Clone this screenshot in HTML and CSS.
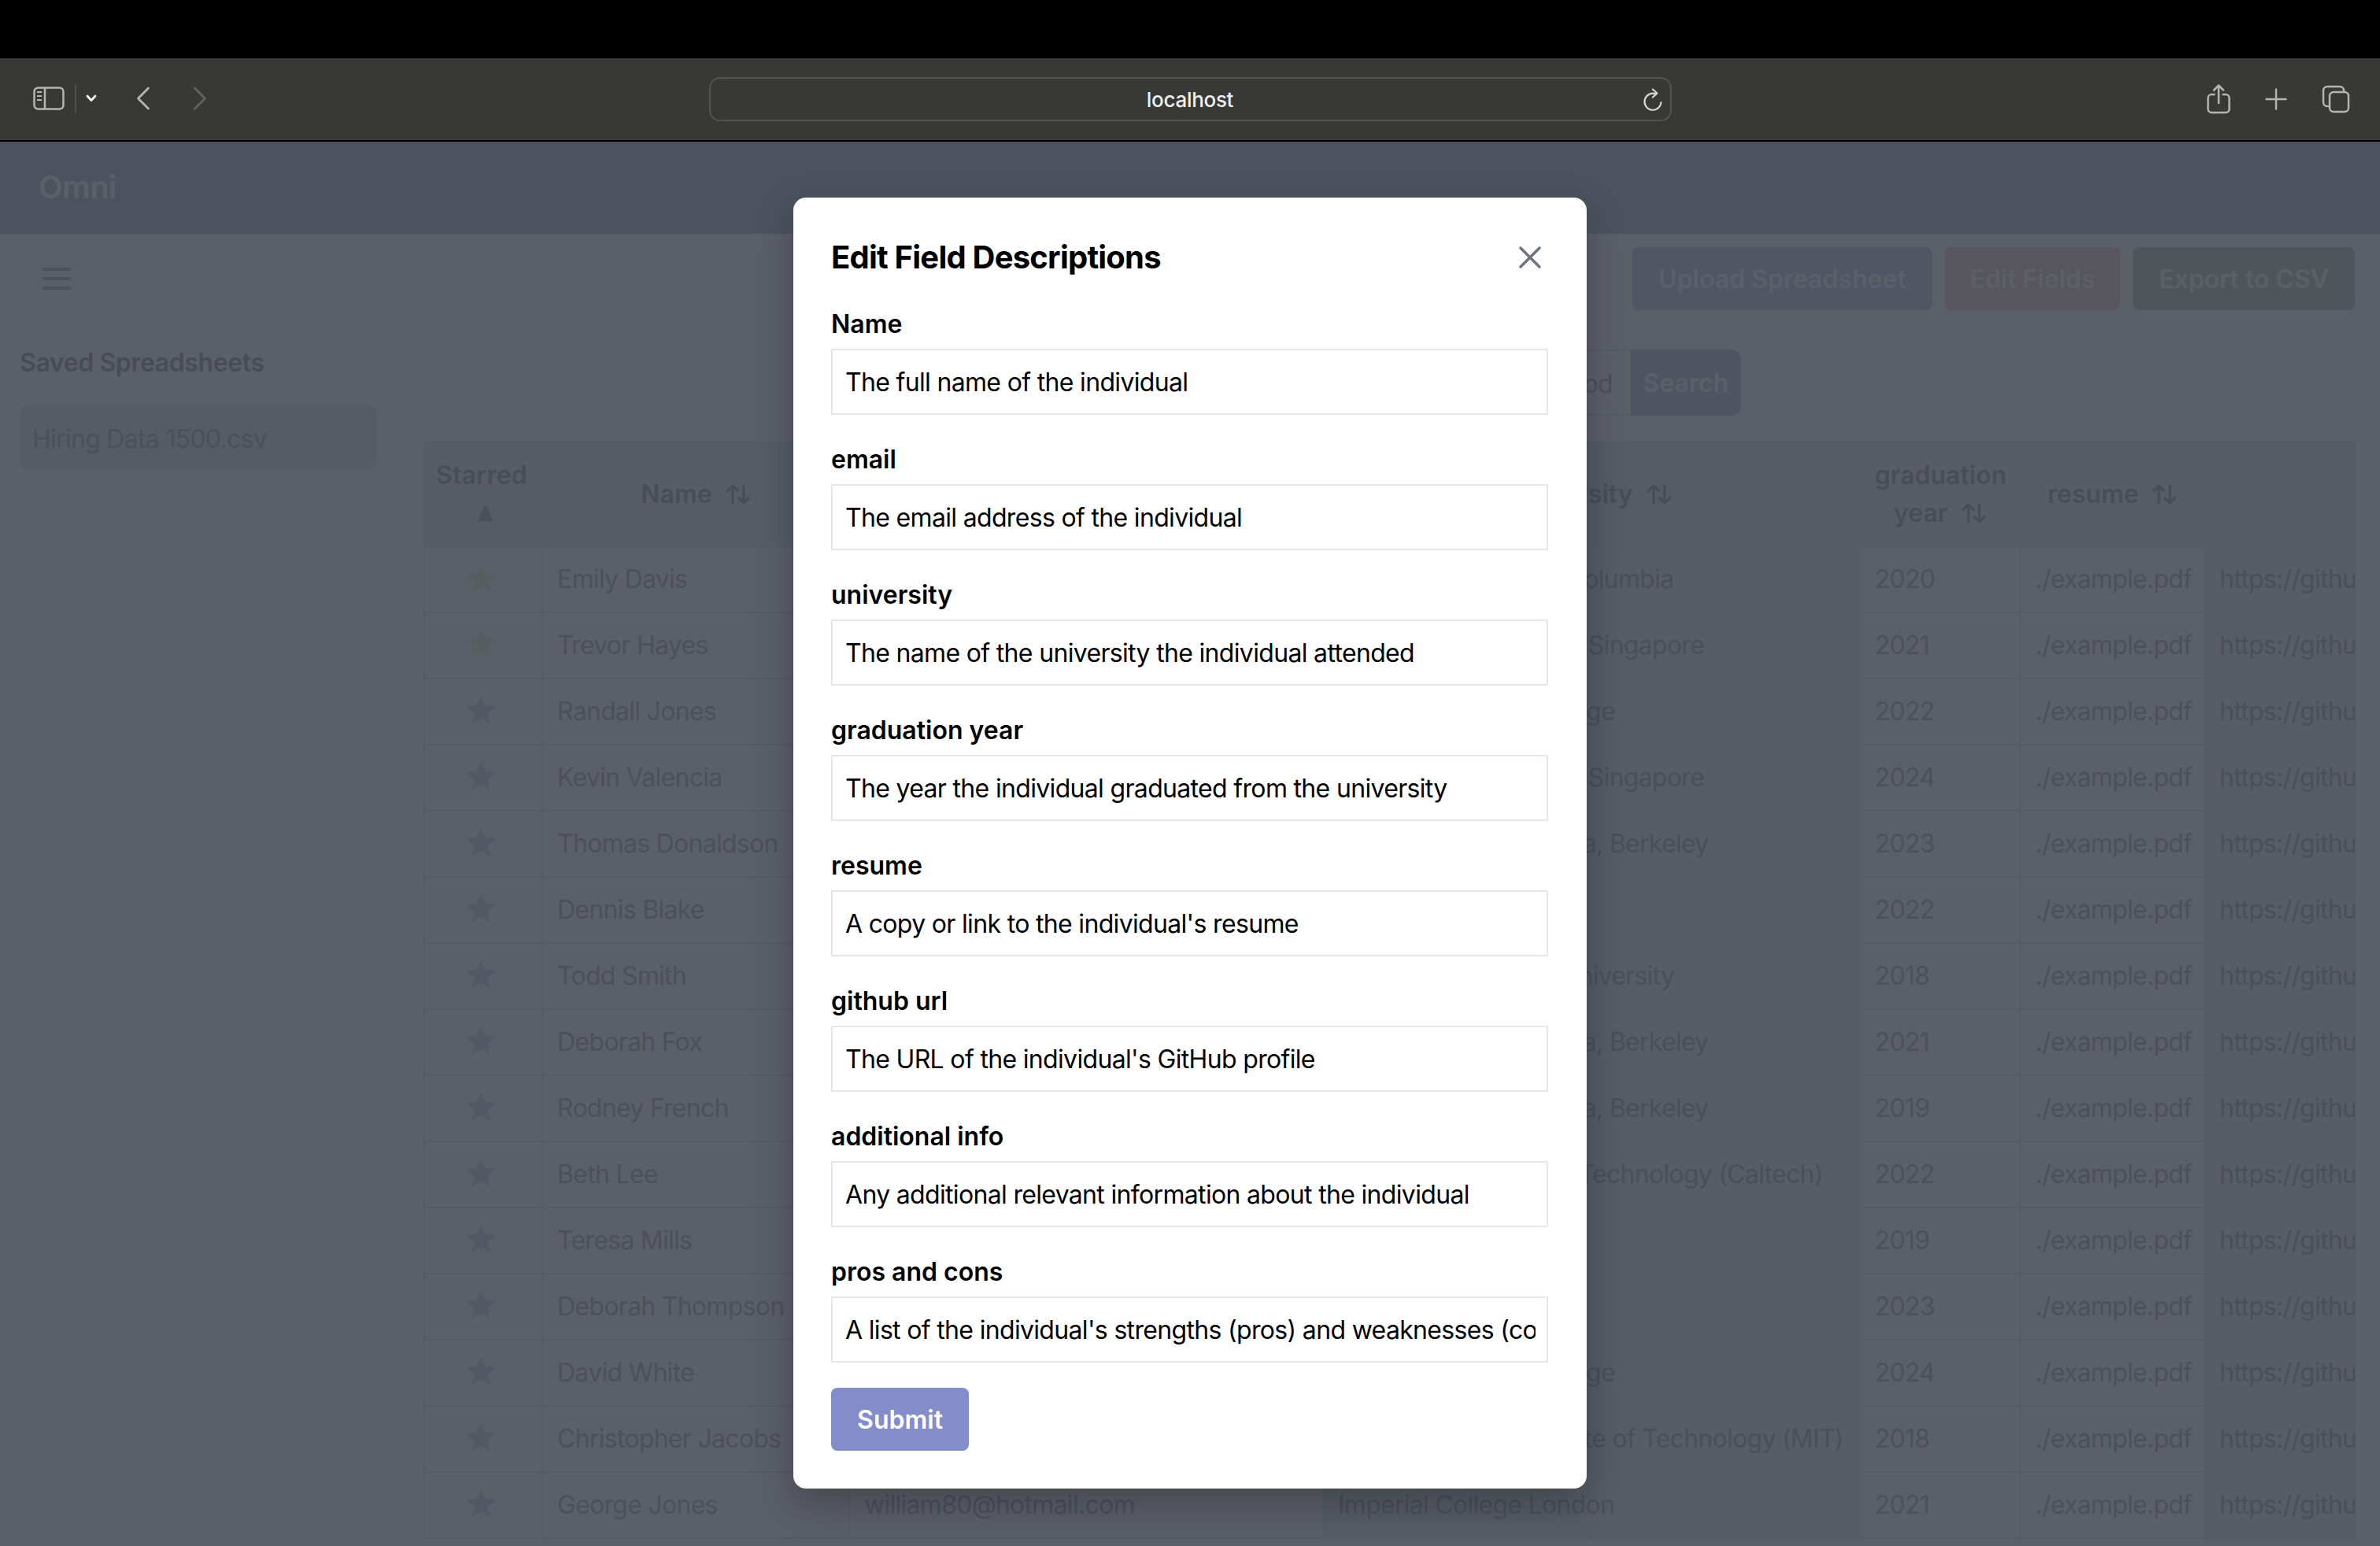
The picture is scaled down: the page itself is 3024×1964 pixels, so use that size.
FILE: index.html
```html
<!DOCTYPE html>
<html lang="en">
<head>
<meta charset="utf-8">
<title>Omni</title>
<link rel="stylesheet" href="styles.css">
</head>
<body>
<div class="window">
  <div class="titlebar"></div>
  <div class="toolbar">
    <div class="tools-left">
      <svg class="ic-sidebar" width="40" height="30" viewBox="0 0 40 30" fill="none" stroke="#b4b4b2" stroke-width="2.5"><rect x="1.5" y="1.5" width="37" height="27" rx="5"/><path d="M15 2v26"/><path d="M5 7h6M5 12h6M5 17h6" stroke-width="2"/></svg>
      <span class="tool-divider"></span>
      <svg class="ic-chevron" width="14" height="10" viewBox="0 0 14 10" fill="none" stroke="#f2f2f0" stroke-width="2.8" stroke-linecap="round" stroke-linejoin="round"><path d="M2 2l5 5.5L12 2"/></svg>
      <svg class="ic-back" width="18" height="30" viewBox="0 0 18 30" fill="none" stroke="#b4b4b2" stroke-width="2.8" stroke-linecap="round" stroke-linejoin="round"><path d="M15.500 2L2.500 15l13 13"/></svg>
      <svg class="ic-forward" width="18" height="30" viewBox="0 0 18 30" fill="none" stroke="#626260" stroke-width="2.800" stroke-linecap="round" stroke-linejoin="round"><path d="M2.500 2l13 13-13 13"/></svg>
    </div>
    <div class="urlbar">
      <span class="url-text">localhost</span>
      <svg class="ic-reload" width="26" height="30" viewBox="0 0 26 30" fill="none" stroke="#d8d8d6" stroke-width="2.200" stroke-linecap="round" stroke-linejoin="round"><path d="M17 7.500A10.500 10.500 0 1 0 23.500 18"/><path d="M13 1.500L18.500 6.500 13 11.500"/></svg>
    </div>
    <div class="tools-right">
      <svg width="30" height="38" viewBox="0 0 30 38" fill="none" stroke="#b4b4b2" stroke-width="2.500" stroke-linecap="round" stroke-linejoin="round"><path d="M9.500 13H6a4.500 4.500 0 0 0-4.500 4.500v14A4.500 4.500 0 0 0 6 36h18a4.500 4.500 0 0 0 4.500-4.500v-14A4.500 4.500 0 0 0 24 13h-3.500"/><path d="M15 24V2M9 7.500L15 1.500l6 6"/></svg>
      <svg width="28" height="28" viewBox="0 0 28 28" fill="none" stroke="#b4b4b2" stroke-width="2.500" stroke-linecap="round"><path d="M14 1.500v25M1.500 14h25"/></svg>
      <svg width="36" height="36" viewBox="0 0 36 36" fill="none" stroke="#b4b4b2" stroke-width="2.500"><path d="M9 27H7a5 5 0 0 1-5-5V7a5 5 0 0 1 5-5h16a5 5 0 0 1 5 5v2"/><rect x="10" y="9" width="24" height="25" rx="5"/></svg>
    </div>
  </div>

  <div class="app">
    <header class="app-header"><span class="brand">Omni</span></header>
    <div class="main">
      <aside class="sidebar">
        <div class="hamburger"><span></span><span></span><span></span></div>
        <h2 class="side-title">Saved Spreadsheets</h2>
        <div class="side-item">Hiring Data 1500.csv</div>
      </aside>
      <section class="content">
        <div class="actions">
          <button class="btn btn-upload">Upload Spreadsheet</button>
          <button class="btn btn-edit">Edit Fields</button>
          <button class="btn btn-export">Export to CSV</button>
        </div>
        <div class="search-row">
          <div class="search-input">method</div>
          <button class="search-btn">Search</button>
        </div>
        <table class="grid">
          <colgroup>
            <col class="c-star"><col class="c-name"><col class="c-email"><col class="c-uni"><col class="c-year"><col class="c-resume"><col class="c-git">
          </colgroup>
          <thead>
            <tr>
              <th class="th-star">Starred<svg class="sort-up" width="20" height="22" viewBox="0 0 20 22" fill="currentColor" stroke="currentColor" stroke-width="3" stroke-linejoin="round"><path d="M10 2L18 20H2z"/></svg></th>
              <th>Name<svg class="sort" viewBox="0 0 32 28" fill="none" stroke="currentColor" stroke-width="3.400" stroke-linecap="round" stroke-linejoin="round"><path d="M9 25V3M2.500 9.500L9 3l6.500 6.500M23 3v22M16.500 18.500L23 25l6.500-6.500"/></svg></th>
              <th>email<svg class="sort" viewBox="0 0 32 28" fill="none" stroke="currentColor" stroke-width="3.400" stroke-linecap="round" stroke-linejoin="round"><path d="M9 25V3M2.500 9.500L9 3l6.500 6.500M23 3v22M16.500 18.500L23 25l6.500-6.500"/></svg></th>
              <th class="dark">university<svg class="sort" viewBox="0 0 32 28" fill="none" stroke="currentColor" stroke-width="3.400" stroke-linecap="round" stroke-linejoin="round"><path d="M9 25V3M2.500 9.500L9 3l6.500 6.500M23 3v22M16.500 18.500L23 25l6.500-6.500"/></svg></th>
              <th>graduation year<svg class="sort" viewBox="0 0 32 28" fill="none" stroke="currentColor" stroke-width="3.400" stroke-linecap="round" stroke-linejoin="round"><path d="M9 25V3M2.500 9.500L9 3l6.500 6.500M23 3v22M16.500 18.500L23 25l6.500-6.500"/></svg></th>
              <th>resume<svg class="sort" viewBox="0 0 32 28" fill="none" stroke="currentColor" stroke-width="3.400" stroke-linecap="round" stroke-linejoin="round"><path d="M9 25V3M2.500 9.500L9 3l6.500 6.500M23 3v22M16.500 18.500L23 25l6.500-6.500"/></svg></th>
              <th class="dark"></th>
            </tr>
          </thead>
          <tbody id="rows"></tbody>
        </table>
      </section>
    </div>

    <div class="overlay">
      <form class="modal">
        <div class="modal-head">
          <h3 class="modal-title">Edit Field Descriptions</h3>
          <svg class="modal-close" width="28" height="28" viewBox="0 0 28 28" fill="none" stroke="#6b7280" stroke-width="3.400" stroke-linecap="round"><path d="M2 2l24 24M26 2L2 26"/></svg>
        </div>
        <div class="field"><label class="field-label">Name</label><input class="field-input" value="The full name of the individual"></div>
        <div class="field"><label class="field-label">email</label><input class="field-input" value="The email address of the individual"></div>
        <div class="field"><label class="field-label">university</label><input class="field-input" value="The name of the university the individual attended"></div>
        <div class="field"><label class="field-label">graduation year</label><input class="field-input" value="The year the individual graduated from the university"></div>
        <div class="field"><label class="field-label">resume</label><input class="field-input" value="A copy or link to the individual's resume"></div>
        <div class="field"><label class="field-label">github url</label><input class="field-input" value="The URL of the individual's GitHub profile"></div>
        <div class="field"><label class="field-label">additional info</label><input class="field-input" value="Any additional relevant information about the individual"></div>
        <div class="field"><label class="field-label">pros and cons</label><input class="field-input" value="A list of the individual's strengths (pros) and weaknesses (cons)"></div>
        <button class="submit" type="button">Submit</button>
      </form>
    </div>
  </div>
</div>
<script src="rows.js"></script>
</body>
</html>
```

FILE: rows.js
```js
var data = [
  ["Emily Davis", "", "University of British Columbia", "2020", 1],
  ["Trevor Hayes", "", "National University of Singapore", "2021", 1],
  ["Randall Jones", "", "University of Cambridge", "2022", 0],
  ["Kevin Valencia", "", "National University of Singapore", "2024", 0],
  ["Thomas Donaldson", "", "University of California, Berkeley", "2023", 0],
  ["Dennis Blake", "", "", "2022", 0],
  ["Todd Smith", "", "Pennsylvania State University", "2018", 0],
  ["Deborah Fox", "", "University of California, Berkeley", "2021", 0],
  ["Rodney French", "", "University of California, Berkeley", "2019", 0],
  ["Beth Lee", "", "California Institute of Technology (Caltech)", "2022", 0],
  ["Teresa Mills", "", "", "2019", 0],
  ["Deborah Thompson", "", "", "2023", 0],
  ["David White", "", "University of Cambridge", "2024", 0],
  ["Christopher Jacobs", "", "Massachusetts Institute of Technology (MIT)", "2018", 0],
  ["George Jones", "william80@hotmail.com", "Imperial College London", "2021", 0]
];
var star = '<path d="M11.48 3.499a.562.562 0 011.04 0l2.125 5.111a.563.563 0 00.475.345l5.518.442c.499.04.701.663.321.988l-4.204 3.602a.563.563 0 00-.182.557l1.285 5.385a.562.562 0 01-.84.61l-4.725-2.885a.562.562 0 00-.586 0L6.982 20.54a.562.562 0 01-.84-.61l1.285-5.386a.562.562 0 00-.182-.557l-4.204-3.602a.563.563 0 01.321-.988l5.518-.442a.563.563 0 00.475-.345L11.48 3.5z"/>';
document.getElementById("rows").innerHTML = data.map(function (r) {
  return '<tr><td class="star-cell"><svg class="star ' + (r[4] ? "on" : "off") + '" viewBox="0 0 24 24">' + star + "</svg></td>" +
    "<td>" + r[0] + "</td><td>" + r[1] + '</td><td class="dark">' + r[2] + "</td><td>" + r[3] +
    '</td><td>./example.pdf</td><td class="dark git">https://github.com/example</td></tr>';
}).join("");
```

FILE: styles.css
```css
* { box-sizing: border-box; }
html, body { margin: 0; height: 100%; }
body { overflow: hidden; background: #fff; font-family: Inter, "Liberation Sans", sans-serif; font-size: 32px; letter-spacing: -0.72px; color: #c2c4ca; }
.window { width: 3024px; height: 1964px; display: flex; flex-direction: column; overflow: hidden; }

.titlebar { height: 74px; background: #000; flex: none; }
.toolbar { height: 106px; flex: none; background: #383836; border-bottom: 2px solid #000; display: grid; grid-template-columns: 1fr 1223px 1fr; align-items: center; }
.tools-left { display: flex; align-items: center; padding-left: 42px; margin-bottom: 3px; }
.tool-divider { width: 2px; height: 36px; background: #4f4f4d; margin-left: 13px; }
.ic-chevron { margin-left: 12px; }
.ic-back { margin-left: 50px; }
.ic-forward { margin-left: 54px; }
.urlbar { height: 56px; border: 2px solid #525250; border-radius: 14px; position: relative; display: flex; align-items: center; justify-content: center; }
.url-text { color: #f0f0ee; font-size: 26px; letter-spacing: -0.3px; font-weight: 500; }
.ic-reload { position: absolute; right: 9px; top: 12px; }
.tools-right { display: flex; align-items: center; justify-content: flex-end; gap: 44px; padding-right: 38px; }

.app { flex: 1; position: relative; min-height: 0; overflow: hidden; }
.app-header { height: 117px; background: #c6ced8; display: flex; align-items: center; padding: 0 0 2px 49px; }
.brand { color: #fff; font-size: 40px; letter-spacing: -0.8px; font-weight: 600; }
.main { display: flex; }
.sidebar { width: 538px; flex: none; padding-left: 25px; padding-top: 43px; }
.hamburger { margin-left: 29px; width: 36px; height: 28px; display: flex; flex-direction: column; justify-content: space-between; }
.hamburger span { height: 4px; background: #c4c6d0; }
.side-title { margin: 69px 0 0; font-size: 32px; letter-spacing: -0.4px; line-height: 48px; font-weight: 600; color: #b4b2b8; }
.side-item { margin-top: 31px; width: 453px; height: 79px; border-radius: 8px; background: #ecedf2; padding: 2px 0 0 16px; line-height: 79px; color: #c0c2d0; }

.content { flex: 1; padding: 17px 32px 0 0; min-width: 0; }
.actions { display: flex; justify-content: flex-end; gap: 16px; }
.btn { height: 80px; padding: 0 33px; border: 0; border-radius: 8px; font: 600 32px Inter, sans-serif; color: #fff; }
.btn-upload { background: #d4dbec; }
.btn-edit { padding: 0 32px; background: #f0dad4; }
.btn-export { background: #d0dacc; }
.search-row { display: flex; justify-content: flex-end; margin-top: 50px; padding-right: 780px; }
.search-input { width: 754px; height: 84px; padding-right: 23px; text-align: right; line-height: 84px; border: 2px solid #eeeef0; border-right: 0; border-radius: 8px 0 0 8px; color: #c2c4ca; }
.search-btn { width: 140px; height: 84px; border: 0; border-radius: 0 12px 12px 0; background: #d0d5e6; font: 600 32px Inter, sans-serif; color: #fff; }

.grid { margin-top: 32px; width: 2454px; table-layout: fixed; border-collapse: collapse; }
.c-star { width: 150px; } .c-name { width: 390px; } .c-email { width: 602px; } .c-uni { width: 682px; }
.c-year { width: 204px; } .c-resume { width: 234px; } .c-git { width: 192px; }
.grid th { height: 133px; padding: 0 18px; background: #f0f3f5; border: 2px solid #f0f0f2; font-weight: 600; letter-spacing: 0; line-height: 48px; color: #b4b6c0; text-align: center; }
.grid th.th-star { padding: 0 28px 0 14px; letter-spacing: 0.2px; }
.grid td { height: 84px; padding: 0 18px 2px; border: 2px solid #f0f0f2; white-space: nowrap; overflow: hidden; color: #c2c4ca; }
.grid th.dark { background: #eaeef0; }
.grid td.dark { background: #eef1f3; color: #bcbec6; }
.grid td.git { padding-right: 0; text-overflow: clip; }
.grid td.star-cell { padding: 0 0 4px; text-align: center; }
.sort { width: 32px; height: 28px; margin-left: 17px; vertical-align: -3px; }
.sort-up { display: block; margin: 13px auto 13px 50%; color: #c0c2cc; }
.star { width: 46px; height: 46px; vertical-align: middle; margin-right: 6px; }
.star.on { fill: #f4f6e0; }
.star.off { fill: #e0e2f0; }

.overlay { position: absolute; inset: 0; background: rgba(36, 42, 54, 0.75); display: flex; justify-content: center; align-items: flex-start; padding-top: 71px; }
.modal { width: 1008px; height: 1640px; padding: 48px 49px 48px 48px; background: #fff; border-radius: 16px; box-shadow: 0 20px 50px rgba(0, 0, 0, 0.25); letter-spacing: 0; }
.modal-head { display: flex; justify-content: space-between; align-items: center; height: 56px; margin-bottom: 32px; padding-right: 9px; }
.modal-title { margin: 0; font-size: 40px; letter-spacing: -0.78px; line-height: 56px; font-weight: 700; color: #000; }
.field { margin-bottom: 32px; }
.field-label { display: block; height: 48px; margin-bottom: 8px; font-size: 32px; line-height: 50px; font-weight: 600; color: #000; }
.field-input { display: block; width: 100%; height: 84px; padding: 0 14px 0 16px; border: 2px solid #e5e7eb; background: #fff; font: 400 32px Inter, sans-serif; letter-spacing: -0.67px; color: #000; outline: 0; }
.submit { display: block; width: 175px; height: 80px; padding: 0; border: 0; border-radius: 8px; background: #828dca; font: 600 32px Inter, sans-serif; color: #fff; }
```
